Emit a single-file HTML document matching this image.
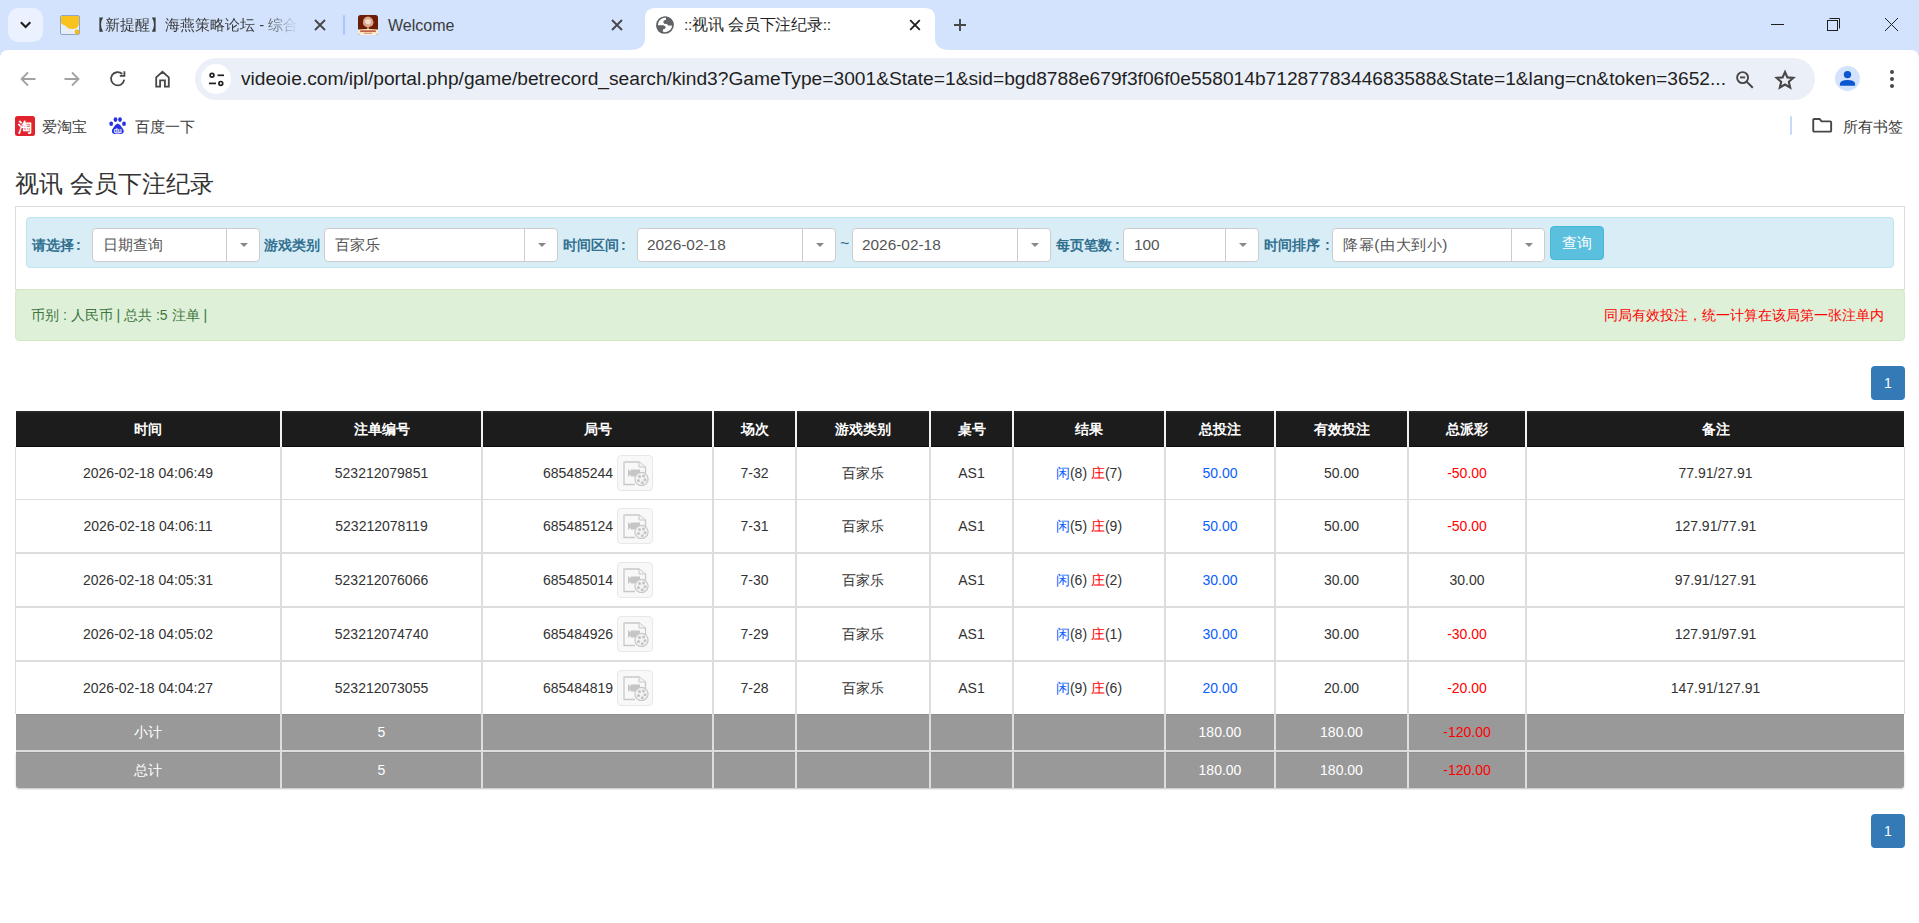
<!DOCTYPE html>
<html><head><meta charset="utf-8"><title>bet record</title>
<style>
html,body{margin:0;padding:0;}
body{position:relative;width:1919px;height:923px;overflow:hidden;background:#fff;font-family:"Liberation Sans",sans-serif;}
</style></head><body>
<div style="position:absolute;left:0;top:0;width:1919px;height:62px;background:#d3e3fd"></div>
<div style="position:absolute;left:8px;top:8px;width:35px;height:34px;border-radius:10px;background:#ebf1fe"></div>
<svg style="position:absolute;left:18px;top:18px" width="16" height="14" viewBox="0 0 16 14"><path d="M2.9 4.3 L7.6 9 L12.3 4.3" fill="none" stroke="#1f1f1f" stroke-width="2.1"/></svg>
<svg style="position:absolute;left:60px;top:15px" width="20" height="20" viewBox="0 0 20 20">
<rect x="0.5" y="0.5" width="19" height="19" rx="1.5" fill="#e6eef9" stroke="#8fa6c9"/>
<path d="M1 1 H19 V8.5 Q18.5 14 12 14 Q7.5 14 6 11 Q3 10.5 1 8 Z" fill="#f8c31c"/>
<circle cx="17" cy="17" r="2.4" fill="#f6b91a"/>
</svg>
<div style="position:absolute;left:90px;top:14px;width:208px;height:22px;overflow:hidden;white-space:nowrap;font-size:15px;line-height:22px;color:#3b3b3b;-webkit-mask-image:linear-gradient(to right,#000 172px,transparent 208px)">【新提醒】海燕策略论坛 - 综合</div>
<svg style="position:absolute;left:313px;top:18px" width="14" height="14" viewBox="0 0 14 14"><path d="M2 2 L12 12 M12 2 L2 12" stroke="#474747" stroke-width="1.9"/></svg>
<div style="position:absolute;left:343px;top:15px;width:2px;height:20px;border-radius:1px;background:#a8c7fa"></div>
<svg style="position:absolute;left:358px;top:15px" width="20" height="20" viewBox="0 0 20 20">
<rect x="0" y="0" width="20" height="20" rx="2.5" fill="#6c1c07"/>
<path d="M0 14.6 Q10 13.2 20 14.6 V17.5 Q20 20 17.5 20 H2.5 Q0 20 0 17.5 Z" fill="#fbefd0"/>
<path d="M5 6.5 Q5.5 2 10 1.6 Q14.5 2.2 15.5 7 Q15.6 10.5 12.5 11.6 Q11 12 10.6 12.8 L11.2 14 H8.8 L9.4 12.8 Q8.8 12 7.2 11.6 Q4.6 10.5 5 6.5 Z" fill="#d9a58a"/>
<path d="M7 5.5 Q9 3.5 12 4.5 Q13.5 6 12.5 8.5 Q10.5 10 8.5 9 Q6.5 7.5 7 5.5 Z" fill="#f3dccd"/>
<rect x="2.2" y="15.3" width="15.6" height="1.8" fill="#b4442a" opacity="0.85"/>
<rect x="6" y="17.8" width="8" height="1" fill="#c0664a" opacity="0.7"/>
</svg>
<div style="position:absolute;left:388px;top:15px;height:22px;white-space:nowrap;font-size:16px;line-height:22px;color:#3b3b3b">Welcome</div>
<svg style="position:absolute;left:610px;top:18px" width="14" height="14" viewBox="0 0 14 14"><path d="M2 2 L12 12 M12 2 L2 12" stroke="#474747" stroke-width="1.9"/></svg>
<svg style="position:absolute;left:630px;top:0" width="320" height="50" viewBox="0 0 320 50">
<path d="M0 50 Q15 50 15 38 V18 Q15 8 25 8 H295 Q305 8 305 18 V38 Q305 50 320 50 Z" fill="#ffffff"/>
</svg>
<svg style="position:absolute;left:654px;top:14px" width="22" height="22" viewBox="0 0 22 22">
<circle cx="11" cy="11" r="8" fill="none" stroke="#5f6368" stroke-width="1.7"/>
<path d="M12 2.6 L12 5.8 Q9.2 6.3 9.2 8.2 Q9.5 10 12.6 10.1 Q13.8 10.4 14 11.5 L19.6 11.5 A8.7 8.7 0 0 0 12 2.6 Z" fill="#5f6368"/>
<path d="M2.4 11.2 L9.5 11.2 Q11.8 12 11.7 13.8 Q11.3 15 9 15.4 Q8.6 16.5 8.8 19.7 A8.7 8.7 0 0 1 2.4 11.2 Z" fill="#5f6368"/>
</svg>
<div style="position:absolute;left:684px;top:14px;height:22px;white-space:nowrap;letter-spacing:-0.2px;font-size:15.5px;line-height:22px;color:#1f1f1f">::视讯 会员下注纪录::</div>
<svg style="position:absolute;left:908px;top:18px" width="14" height="14" viewBox="0 0 14 14"><path d="M2.2 2.2 L11.8 11.8 M11.8 2.2 L2.2 11.8" stroke="#1f1f1f" stroke-width="1.8"/></svg>
<svg style="position:absolute;left:953px;top:18px" width="14" height="14" viewBox="0 0 14 14"><path d="M7 1 V13 M1 7 H13" stroke="#474747" stroke-width="1.9"/></svg>
<div style="position:absolute;left:1771px;top:24px;width:13px;height:1px;background:#1f1f1f"></div>
<svg style="position:absolute;left:1826px;top:17px" width="16" height="16" viewBox="0 0 16 16">
<rect x="1.5" y="3.5" width="10" height="10" fill="none" stroke="#1f1f1f" stroke-width="1"/>
<path d="M3.5 1.5 H13.5 V11.5" fill="none" stroke="#1f1f1f" stroke-width="1"/>
</svg>
<svg style="position:absolute;left:1884px;top:17px" width="15" height="15" viewBox="0 0 15 15"><path d="M1 1 L14 14 M14 1 L1 14" stroke="#1f1f1f" stroke-width="1"/></svg>
<div style="position:absolute;left:0;top:50px;width:1919px;height:98px;background:#fff;border-radius:8px 8px 0 0"></div>
<svg style="position:absolute;left:19px;top:70px" width="18" height="18" viewBox="0 0 18 18"><path d="M16.5 9 H2.5 M9 2.5 L2.5 9 L9 15.5" fill="none" stroke="#a2a2a2" stroke-width="1.8"/></svg>
<svg style="position:absolute;left:63px;top:70px" width="18" height="18" viewBox="0 0 18 18"><path d="M1.5 9 H15.5 M9 2.5 L15.5 9 L9 15.5" fill="none" stroke="#a2a2a2" stroke-width="1.8"/></svg>
<svg style="position:absolute;left:109px;top:70px" width="18" height="18" viewBox="0 0 18 18">
<path d="M13.2 4 A6.6 6.6 0 1 0 15.2 9.6" fill="none" stroke="#474747" stroke-width="1.8"/>
<path d="M15.4 1.2 V5.8 H10.8" fill="none" stroke="#474747" stroke-width="1.8"/>
</svg>
<svg style="position:absolute;left:154px;top:70px" width="18" height="18" viewBox="0 0 18 18">
<path d="M2.2 16.6 V7.4 L8.5 1.8 L14.8 7.4 V16.6 H10.9 V10.4 H6.1 V16.6 Z" fill="none" stroke="#474747" stroke-width="1.8" stroke-linejoin="miter"/>
</svg>
<div style="position:absolute;left:195px;top:58px;width:1620px;height:42px;border-radius:21px;background:#ebeff7"></div>
<div style="position:absolute;left:201px;top:64px;width:30px;height:30px;border-radius:15px;background:#fff"></div>
<svg style="position:absolute;left:207px;top:71px" width="18" height="17" viewBox="0 0 18 17">
<circle cx="5" cy="4.3" r="1.9" fill="none" stroke="#1f1f1f" stroke-width="1.7"/>
<path d="M10.5 4.3 H17" stroke="#1f1f1f" stroke-width="1.7"/>
<circle cx="13.8" cy="12.4" r="1.9" fill="none" stroke="#1f1f1f" stroke-width="1.7"/>
<path d="M2 12.4 H9" stroke="#1f1f1f" stroke-width="1.7"/>
</svg>
<div id="url" style="position:absolute;left:241px;top:67px;height:24px;white-space:nowrap;font-size:19.2px;line-height:24px;color:#1f1f1f">videoie.com/ipl/portal.php/game/betrecord_search/kind3?GameType=3001&amp;State=1&amp;sid=bgd8788e679f3f06f0e558014b7128778344683588&amp;State=1&amp;lang=cn&amp;token=3652...</div>
<svg style="position:absolute;left:1735px;top:70px" width="20" height="20" viewBox="0 0 20 20">
<circle cx="7.6" cy="7.6" r="5.5" fill="none" stroke="#474747" stroke-width="1.9"/>
<path d="M5 7.4 H10.2" stroke="#474747" stroke-width="1.9"/>
<path d="M11.6 11.6 L17.8 17.8" stroke="#474747" stroke-width="2"/>
</svg>
<svg style="position:absolute;left:1774px;top:69px" width="22" height="21" viewBox="0 0 22 21">
<path d="M11 3 L13.4 8.4 L19.3 8.9 L14.8 12.8 L16.2 18.5 L11 15.5 L5.8 18.5 L7.2 12.8 L2.7 8.9 L8.6 8.4 Z" fill="none" stroke="#474747" stroke-width="2.1" stroke-linejoin="miter"/>
</svg>
<div style="position:absolute;left:1835px;top:66px;width:25px;height:25px;border-radius:50%;background:#d3e3fd"></div>
<svg style="position:absolute;left:1835px;top:66px" width="25" height="25" viewBox="0 0 25 25">
<circle cx="12.5" cy="8.6" r="3.7" fill="#0b57d0"/>
<path d="M4.9 19.8 V17.8 Q5.2 14.2 12.5 14 Q19.8 14.2 20.1 17.8 V19.8 Z" fill="#0b57d0"/>
</svg>
<div style="position:absolute;left:1890px;top:70px;width:4px;height:4px;border-radius:2px;background:#474747"></div>
<div style="position:absolute;left:1890px;top:77px;width:4px;height:4px;border-radius:2px;background:#474747"></div>
<div style="position:absolute;left:1890px;top:84px;width:4px;height:4px;border-radius:2px;background:#474747"></div>
<svg style="position:absolute;left:15px;top:116px" width="20" height="20" viewBox="0 0 20 20">
<rect x="0" y="0" width="20" height="20" rx="2.5" fill="#e0232c"/>
<text x="10" y="15.5" font-size="14" font-weight="bold" fill="#fff" text-anchor="middle" font-family="Liberation Sans">淘</text>
</svg>
<div style="position:absolute;left:42px;top:116px;height:22px;white-space:nowrap;font-size:14.7px;line-height:22px;color:#3b3b3b">爱淘宝</div>
<svg style="position:absolute;left:109px;top:117px" width="18" height="18" viewBox="0 0 18 18">
<ellipse cx="2.2" cy="6.8" rx="1.9" ry="2.3" fill="#2932e1"/>
<ellipse cx="6.5" cy="2.6" rx="1.9" ry="2.4" fill="#2932e1"/>
<ellipse cx="11" cy="2.6" rx="1.9" ry="2.4" fill="#2932e1"/>
<ellipse cx="15" cy="6.8" rx="1.9" ry="2.3" fill="#2932e1"/>
<path d="M8.7 6.5 Q11 6.8 13 10.5 Q15.5 13.5 14.5 15.5 Q13.5 17.3 11 16.8 Q8.7 16.2 6.5 16.8 Q3.8 17.3 3 15.3 Q2.3 13 4.5 10.5 Q6.5 6.8 8.7 6.5 Z" fill="#2932e1"/>
<text x="8.8" y="16" font-size="6.5" font-weight="bold" fill="#fff" text-anchor="middle" font-family="Liberation Sans">du</text>
</svg>
<div style="position:absolute;left:135px;top:116px;height:22px;white-space:nowrap;font-size:14.7px;line-height:22px;color:#3b3b3b">百度一下</div>
<div style="position:absolute;left:1790px;top:116px;width:2px;height:19px;border-radius:1px;background:#c7dafc"></div>
<svg style="position:absolute;left:1812px;top:117px" width="21" height="17" viewBox="0 0 21 17">
<path d="M1.25 2.9 Q1.25 1.95 2.2 1.95 H7.6 L9.6 4.4 H18.2 Q19.15 4.4 19.15 5.35 V13.7 Q19.15 14.65 18.2 14.65 H2.2 Q1.25 14.65 1.25 13.7 Z" fill="none" stroke="#474747" stroke-width="1.9" stroke-linejoin="round"/>
</svg>
<div style="position:absolute;left:1843px;top:116px;height:22px;white-space:nowrap;font-size:14.7px;line-height:22px;color:#3b3b3b">所有书签</div>
<div id="title" style="position:absolute;left:15px;top:167px;height:34px;line-height:34px;font-size:24px;color:#333;white-space:nowrap">视讯 会员下注纪录</div>
<div style="position:absolute;left:15px;top:206px;width:1888px;height:82px;border:1px solid #ddd;border-bottom:1px solid #ddd;background:#fff"></div>
<div style="position:absolute;left:26px;top:217px;width:1866px;height:49px;border:1px solid #bce8f1;border-radius:4px;background:#d9edf7"></div>
<div id="lab1" style="position:absolute;left:32px;top:234px;height:22px;line-height:22px;font-size:14.3px;font-weight:bold;color:#31708f;white-space:nowrap">请选择<span style="margin-left:2px">:</span></div>
<div style="position:absolute;left:92px;top:228px;width:166px;height:32px;border:1px solid #ccc;border-radius:4px;background:#fff"></div>
<div style="position:absolute;left:226px;top:229px;width:1px;height:32px;background:#ccc"></div>
<svg style="position:absolute;left:240px;top:243px" width="8" height="4" viewBox="0 0 8 4"><path d="M0 0 H8 L4 4 Z" fill="#888"/></svg>
<div id="sel1" style="position:absolute;left:103px;top:228px;height:34px;line-height:34px;font-size:15.4px;color:#555;white-space:nowrap">日期查询</div>
<div id="lab2" style="position:absolute;left:264px;top:234px;height:22px;line-height:22px;font-size:14.3px;font-weight:bold;color:#31708f;white-space:nowrap">游戏类别</div>
<div style="position:absolute;left:324px;top:228px;width:232px;height:32px;border:1px solid #ccc;border-radius:4px;background:#fff"></div>
<div style="position:absolute;left:524px;top:229px;width:1px;height:32px;background:#ccc"></div>
<svg style="position:absolute;left:538px;top:243px" width="8" height="4" viewBox="0 0 8 4"><path d="M0 0 H8 L4 4 Z" fill="#888"/></svg>
<div  style="position:absolute;left:335px;top:228px;height:34px;line-height:34px;font-size:15.4px;color:#555;white-space:nowrap">百家乐</div>
<div  style="position:absolute;left:563px;top:234px;height:22px;line-height:22px;font-size:14.3px;font-weight:bold;color:#31708f;white-space:nowrap">时间区间<span style="margin-left:2px">:</span></div>
<div style="position:absolute;left:637px;top:228px;width:197px;height:32px;border:1px solid #ccc;border-radius:4px;background:#fff"></div>
<div style="position:absolute;left:802px;top:229px;width:1px;height:32px;background:#ccc"></div>
<svg style="position:absolute;left:816px;top:243px" width="8" height="4" viewBox="0 0 8 4"><path d="M0 0 H8 L4 4 Z" fill="#888"/></svg>
<div id="sel3" style="position:absolute;left:647px;top:228px;height:34px;line-height:34px;font-size:15.4px;color:#555;white-space:nowrap">2026-02-18</div>
<div style="position:absolute;left:840px;top:233px;height:22px;line-height:22px;font-size:16px;color:#31708f">~</div>
<div style="position:absolute;left:852px;top:228px;width:197px;height:32px;border:1px solid #ccc;border-radius:4px;background:#fff"></div>
<div style="position:absolute;left:1017px;top:229px;width:1px;height:32px;background:#ccc"></div>
<svg style="position:absolute;left:1031px;top:243px" width="8" height="4" viewBox="0 0 8 4"><path d="M0 0 H8 L4 4 Z" fill="#888"/></svg>
<div  style="position:absolute;left:862px;top:228px;height:34px;line-height:34px;font-size:15.4px;color:#555;white-space:nowrap">2026-02-18</div>
<div  style="position:absolute;left:1056px;top:234px;height:22px;line-height:22px;font-size:14.3px;font-weight:bold;color:#31708f;white-space:nowrap">每页笔数<span style="margin-left:3px">:</span></div>
<div style="position:absolute;left:1123px;top:228px;width:134px;height:32px;border:1px solid #ccc;border-radius:4px;background:#fff"></div>
<div style="position:absolute;left:1225px;top:229px;width:1px;height:32px;background:#ccc"></div>
<svg style="position:absolute;left:1239px;top:243px" width="8" height="4" viewBox="0 0 8 4"><path d="M0 0 H8 L4 4 Z" fill="#888"/></svg>
<div  style="position:absolute;left:1134px;top:228px;height:34px;line-height:34px;font-size:15.4px;color:#555;white-space:nowrap">100</div>
<div  style="position:absolute;left:1264px;top:234px;height:22px;line-height:22px;font-size:14.3px;font-weight:bold;color:#31708f;white-space:nowrap">时间排序<span style="margin-left:5px">:</span></div>
<div style="position:absolute;left:1332px;top:228px;width:211px;height:32px;border:1px solid #ccc;border-radius:4px;background:#fff"></div>
<div style="position:absolute;left:1511px;top:229px;width:1px;height:32px;background:#ccc"></div>
<svg style="position:absolute;left:1525px;top:243px" width="8" height="4" viewBox="0 0 8 4"><path d="M0 0 H8 L4 4 Z" fill="#888"/></svg>
<div  style="position:absolute;left:1343px;top:228px;height:34px;line-height:34px;font-size:15.4px;color:#555;white-space:nowrap"><span style="letter-spacing:0.6px">降幂(由大到小)</span></div>
<div style="position:absolute;left:1550px;top:226px;width:52px;height:32px;border:1px solid #46b8da;border-radius:4px;background:#5bc0de"></div>
<div id="btn" style="position:absolute;left:1550px;top:226px;width:54px;height:34px;line-height:34px;text-align:center;font-size:15px;color:#fff">查询</div>
<div style="position:absolute;left:15px;top:289px;width:1888px;height:50px;border:1px solid #d6e9c6;border-radius:4px;background:#dff0d8"></div>
<div id="g1" style="position:absolute;left:31px;top:304px;height:22px;line-height:22px;font-size:14px;color:#3c763d;white-space:nowrap">币别 : 人民币 | 总共 :5 注单 |</div>
<div id="g2" style="position:absolute;right:35px;top:304px;height:22px;line-height:22px;font-size:14px;color:#ff0000;white-space:nowrap">同局有效投注，统一计算在该局第一张注单内</div>
<div style="position:absolute;left:1871px;top:366px;width:34px;height:34px;border-radius:4px;background:#337ab7;color:#fff;font-size:14px;line-height:34px;text-align:center">1</div>
<div style="position:absolute;left:1871px;top:814px;width:34px;height:34px;border-radius:4px;background:#337ab7;color:#fff;font-size:14px;line-height:34px;text-align:center">1</div>
<div style="position:absolute;left:16px;top:411px;width:1888px;height:36px;background:#1c1c1c"></div>
<div style="position:absolute;left:16px;top:411px;width:1888px;height:2px;background:#262626"></div>
<div style="position:absolute;left:16px;top:446px;width:1888px;height:1px;background:#0c0c0c"></div>
<div style="position:absolute;left:280px;top:411px;width:2px;height:36px;background:#f2f2f2"></div>
<div style="position:absolute;left:481px;top:411px;width:2px;height:36px;background:#f2f2f2"></div>
<div style="position:absolute;left:712px;top:411px;width:2px;height:36px;background:#f2f2f2"></div>
<div style="position:absolute;left:795px;top:411px;width:2px;height:36px;background:#f2f2f2"></div>
<div style="position:absolute;left:929px;top:411px;width:2px;height:36px;background:#f2f2f2"></div>
<div style="position:absolute;left:1012px;top:411px;width:2px;height:36px;background:#f2f2f2"></div>
<div style="position:absolute;left:1164px;top:411px;width:2px;height:36px;background:#f2f2f2"></div>
<div style="position:absolute;left:1274px;top:411px;width:2px;height:36px;background:#f2f2f2"></div>
<div style="position:absolute;left:1407px;top:411px;width:2px;height:36px;background:#f2f2f2"></div>
<div style="position:absolute;left:1525px;top:411px;width:2px;height:36px;background:#f2f2f2"></div>
<div style="position:absolute;left:16px;top:411px;width:264px;height:36px;line-height:36px;text-align:center;font-size:14px;font-weight:bold;color:#fff;white-space:nowrap">时间</div>
<div style="position:absolute;left:282px;top:411px;width:199px;height:36px;line-height:36px;text-align:center;font-size:14px;font-weight:bold;color:#fff;white-space:nowrap">注单编号</div>
<div style="position:absolute;left:483px;top:411px;width:229px;height:36px;line-height:36px;text-align:center;font-size:14px;font-weight:bold;color:#fff;white-space:nowrap">局号</div>
<div style="position:absolute;left:714px;top:411px;width:81px;height:36px;line-height:36px;text-align:center;font-size:14px;font-weight:bold;color:#fff;white-space:nowrap">场次</div>
<div style="position:absolute;left:797px;top:411px;width:132px;height:36px;line-height:36px;text-align:center;font-size:14px;font-weight:bold;color:#fff;white-space:nowrap">游戏类别</div>
<div style="position:absolute;left:931px;top:411px;width:81px;height:36px;line-height:36px;text-align:center;font-size:14px;font-weight:bold;color:#fff;white-space:nowrap">桌号</div>
<div style="position:absolute;left:1014px;top:411px;width:150px;height:36px;line-height:36px;text-align:center;font-size:14px;font-weight:bold;color:#fff;white-space:nowrap">结果</div>
<div style="position:absolute;left:1166px;top:411px;width:108px;height:36px;line-height:36px;text-align:center;font-size:14px;font-weight:bold;color:#fff;white-space:nowrap">总投注</div>
<div style="position:absolute;left:1276px;top:411px;width:131px;height:36px;line-height:36px;text-align:center;font-size:14px;font-weight:bold;color:#fff;white-space:nowrap">有效投注</div>
<div style="position:absolute;left:1409px;top:411px;width:116px;height:36px;line-height:36px;text-align:center;font-size:14px;font-weight:bold;color:#fff;white-space:nowrap">总派彩</div>
<div style="position:absolute;left:1527px;top:411px;width:377px;height:36px;line-height:36px;text-align:center;font-size:14px;font-weight:bold;color:#fff;white-space:nowrap">备注</div>
<div style="position:absolute;left:15px;top:447px;width:1px;height:267px;background:#ddd"></div>
<div style="position:absolute;left:1904px;top:447px;width:1px;height:267px;background:#ddd"></div>
<div style="position:absolute;left:280px;top:447px;width:2px;height:267px;background:#ddd"></div>
<div style="position:absolute;left:481px;top:447px;width:2px;height:267px;background:#ddd"></div>
<div style="position:absolute;left:712px;top:447px;width:2px;height:267px;background:#ddd"></div>
<div style="position:absolute;left:795px;top:447px;width:2px;height:267px;background:#ddd"></div>
<div style="position:absolute;left:929px;top:447px;width:2px;height:267px;background:#ddd"></div>
<div style="position:absolute;left:1012px;top:447px;width:2px;height:267px;background:#ddd"></div>
<div style="position:absolute;left:1164px;top:447px;width:2px;height:267px;background:#ddd"></div>
<div style="position:absolute;left:1274px;top:447px;width:2px;height:267px;background:#ddd"></div>
<div style="position:absolute;left:1407px;top:447px;width:2px;height:267px;background:#ddd"></div>
<div style="position:absolute;left:1525px;top:447px;width:2px;height:267px;background:#ddd"></div>
<div style="position:absolute;left:15px;top:499px;width:1890px;height:1px;background:#ddd"></div>
<div style="position:absolute;left:16px;top:447px;width:264px;height:52px;line-height:52px;text-align:center;font-size:14px;color:#333;white-space:nowrap">2026-02-18 04:06:49</div>
<div style="position:absolute;left:282px;top:447px;width:199px;height:52px;line-height:52px;text-align:center;font-size:14px;color:#333;white-space:nowrap">523212079851</div>
<div style="position:absolute;left:543px;top:447px;height:52px;line-height:52px;font-size:14px;color:#333;white-space:nowrap">685485244</div>
<div style="position:absolute;left:617px;top:455px;width:34px;height:34px;border:1px solid #e8e8e8;border-radius:4px;background:#f8f8f8"></div>
<svg style="position:absolute;left:623px;top:461px" width="26" height="25" viewBox="0 0 26 25">
<path d="M1.5 1 H16 L22.5 6 V14" fill="none" stroke="#c8c8c8" stroke-width="1.3"/>
<path d="M1 0.5 V23.5 H12" fill="none" stroke="#c8c8c8" stroke-width="1.3"/>
<path d="M16 1 V6 H22.5" fill="#f3f3f3" stroke="#c8c8c8" stroke-width="1"/>
<path d="M5 8 L7.5 10.5 V8.5 H17 V15.5 H7.5 V13.5 L5 16 Z" fill="#c6c6c6"/>
<circle cx="18.5" cy="18" r="6.6" fill="#f3f3f3" stroke="#c8c8c8" stroke-width="1.2"/>
<circle cx="16.5" cy="15.5" r="1.5" fill="#c4c4c4"/>
<circle cx="20.5" cy="15" r="1.5" fill="#c4c4c4"/>
<circle cx="22" cy="18.8" r="1.5" fill="#c4c4c4"/>
<circle cx="19.3" cy="21.8" r="1.5" fill="#c4c4c4"/>
<circle cx="15.5" cy="19.5" r="1.5" fill="#c4c4c4"/>
</svg>
<div style="position:absolute;left:714px;top:447px;width:81px;height:52px;line-height:52px;text-align:center;font-size:14px;color:#333;white-space:nowrap">7-32</div>
<div style="position:absolute;left:797px;top:447px;width:132px;height:52px;line-height:52px;text-align:center;font-size:14px;color:#333;white-space:nowrap">百家乐</div>
<div style="position:absolute;left:931px;top:447px;width:81px;height:52px;line-height:52px;text-align:center;font-size:14px;color:#333;white-space:nowrap">AS1</div>
<div style="position:absolute;left:1014px;top:447px;width:150px;height:52px;line-height:52px;text-align:center;font-size:14px;color:#333;white-space:nowrap"><span style="color:#0a60ff">闲</span>(8) <span style="color:#ff0000">庄</span>(7)</div>
<div style="position:absolute;left:1166px;top:447px;width:108px;height:52px;line-height:52px;text-align:center;font-size:14px;color:#0a60ff;white-space:nowrap">50.00</div>
<div style="position:absolute;left:1276px;top:447px;width:131px;height:52px;line-height:52px;text-align:center;font-size:14px;color:#333;white-space:nowrap">50.00</div>
<div style="position:absolute;left:1409px;top:447px;width:116px;height:52px;line-height:52px;text-align:center;font-size:14px;color:#ff0000;white-space:nowrap">-50.00</div>
<div style="position:absolute;left:1527px;top:447px;width:377px;height:52px;line-height:52px;text-align:center;font-size:14px;color:#333;white-space:nowrap">77.91/27.91</div>
<div style="position:absolute;left:15px;top:552px;width:1890px;height:2px;background:#ddd"></div>
<div style="position:absolute;left:16px;top:500px;width:264px;height:52px;line-height:52px;text-align:center;font-size:14px;color:#333;white-space:nowrap">2026-02-18 04:06:11</div>
<div style="position:absolute;left:282px;top:500px;width:199px;height:52px;line-height:52px;text-align:center;font-size:14px;color:#333;white-space:nowrap">523212078119</div>
<div style="position:absolute;left:543px;top:500px;height:52px;line-height:52px;font-size:14px;color:#333;white-space:nowrap">685485124</div>
<div style="position:absolute;left:617px;top:508px;width:34px;height:34px;border:1px solid #e8e8e8;border-radius:4px;background:#f8f8f8"></div>
<svg style="position:absolute;left:623px;top:514px" width="26" height="25" viewBox="0 0 26 25">
<path d="M1.5 1 H16 L22.5 6 V14" fill="none" stroke="#c8c8c8" stroke-width="1.3"/>
<path d="M1 0.5 V23.5 H12" fill="none" stroke="#c8c8c8" stroke-width="1.3"/>
<path d="M16 1 V6 H22.5" fill="#f3f3f3" stroke="#c8c8c8" stroke-width="1"/>
<path d="M5 8 L7.5 10.5 V8.5 H17 V15.5 H7.5 V13.5 L5 16 Z" fill="#c6c6c6"/>
<circle cx="18.5" cy="18" r="6.6" fill="#f3f3f3" stroke="#c8c8c8" stroke-width="1.2"/>
<circle cx="16.5" cy="15.5" r="1.5" fill="#c4c4c4"/>
<circle cx="20.5" cy="15" r="1.5" fill="#c4c4c4"/>
<circle cx="22" cy="18.8" r="1.5" fill="#c4c4c4"/>
<circle cx="19.3" cy="21.8" r="1.5" fill="#c4c4c4"/>
<circle cx="15.5" cy="19.5" r="1.5" fill="#c4c4c4"/>
</svg>
<div style="position:absolute;left:714px;top:500px;width:81px;height:52px;line-height:52px;text-align:center;font-size:14px;color:#333;white-space:nowrap">7-31</div>
<div style="position:absolute;left:797px;top:500px;width:132px;height:52px;line-height:52px;text-align:center;font-size:14px;color:#333;white-space:nowrap">百家乐</div>
<div style="position:absolute;left:931px;top:500px;width:81px;height:52px;line-height:52px;text-align:center;font-size:14px;color:#333;white-space:nowrap">AS1</div>
<div style="position:absolute;left:1014px;top:500px;width:150px;height:52px;line-height:52px;text-align:center;font-size:14px;color:#333;white-space:nowrap"><span style="color:#0a60ff">闲</span>(5) <span style="color:#ff0000">庄</span>(9)</div>
<div style="position:absolute;left:1166px;top:500px;width:108px;height:52px;line-height:52px;text-align:center;font-size:14px;color:#0a60ff;white-space:nowrap">50.00</div>
<div style="position:absolute;left:1276px;top:500px;width:131px;height:52px;line-height:52px;text-align:center;font-size:14px;color:#333;white-space:nowrap">50.00</div>
<div style="position:absolute;left:1409px;top:500px;width:116px;height:52px;line-height:52px;text-align:center;font-size:14px;color:#ff0000;white-space:nowrap">-50.00</div>
<div style="position:absolute;left:1527px;top:500px;width:377px;height:52px;line-height:52px;text-align:center;font-size:14px;color:#333;white-space:nowrap">127.91/77.91</div>
<div style="position:absolute;left:15px;top:606px;width:1890px;height:2px;background:#ddd"></div>
<div style="position:absolute;left:16px;top:554px;width:264px;height:52px;line-height:52px;text-align:center;font-size:14px;color:#333;white-space:nowrap">2026-02-18 04:05:31</div>
<div style="position:absolute;left:282px;top:554px;width:199px;height:52px;line-height:52px;text-align:center;font-size:14px;color:#333;white-space:nowrap">523212076066</div>
<div style="position:absolute;left:543px;top:554px;height:52px;line-height:52px;font-size:14px;color:#333;white-space:nowrap">685485014</div>
<div style="position:absolute;left:617px;top:562px;width:34px;height:34px;border:1px solid #e8e8e8;border-radius:4px;background:#f8f8f8"></div>
<svg style="position:absolute;left:623px;top:568px" width="26" height="25" viewBox="0 0 26 25">
<path d="M1.5 1 H16 L22.5 6 V14" fill="none" stroke="#c8c8c8" stroke-width="1.3"/>
<path d="M1 0.5 V23.5 H12" fill="none" stroke="#c8c8c8" stroke-width="1.3"/>
<path d="M16 1 V6 H22.5" fill="#f3f3f3" stroke="#c8c8c8" stroke-width="1"/>
<path d="M5 8 L7.5 10.5 V8.5 H17 V15.5 H7.5 V13.5 L5 16 Z" fill="#c6c6c6"/>
<circle cx="18.5" cy="18" r="6.6" fill="#f3f3f3" stroke="#c8c8c8" stroke-width="1.2"/>
<circle cx="16.5" cy="15.5" r="1.5" fill="#c4c4c4"/>
<circle cx="20.5" cy="15" r="1.5" fill="#c4c4c4"/>
<circle cx="22" cy="18.8" r="1.5" fill="#c4c4c4"/>
<circle cx="19.3" cy="21.8" r="1.5" fill="#c4c4c4"/>
<circle cx="15.5" cy="19.5" r="1.5" fill="#c4c4c4"/>
</svg>
<div style="position:absolute;left:714px;top:554px;width:81px;height:52px;line-height:52px;text-align:center;font-size:14px;color:#333;white-space:nowrap">7-30</div>
<div style="position:absolute;left:797px;top:554px;width:132px;height:52px;line-height:52px;text-align:center;font-size:14px;color:#333;white-space:nowrap">百家乐</div>
<div style="position:absolute;left:931px;top:554px;width:81px;height:52px;line-height:52px;text-align:center;font-size:14px;color:#333;white-space:nowrap">AS1</div>
<div style="position:absolute;left:1014px;top:554px;width:150px;height:52px;line-height:52px;text-align:center;font-size:14px;color:#333;white-space:nowrap"><span style="color:#0a60ff">闲</span>(6) <span style="color:#ff0000">庄</span>(2)</div>
<div style="position:absolute;left:1166px;top:554px;width:108px;height:52px;line-height:52px;text-align:center;font-size:14px;color:#0a60ff;white-space:nowrap">30.00</div>
<div style="position:absolute;left:1276px;top:554px;width:131px;height:52px;line-height:52px;text-align:center;font-size:14px;color:#333;white-space:nowrap">30.00</div>
<div style="position:absolute;left:1409px;top:554px;width:116px;height:52px;line-height:52px;text-align:center;font-size:14px;color:#333;white-space:nowrap">30.00</div>
<div style="position:absolute;left:1527px;top:554px;width:377px;height:52px;line-height:52px;text-align:center;font-size:14px;color:#333;white-space:nowrap">97.91/127.91</div>
<div style="position:absolute;left:15px;top:660px;width:1890px;height:2px;background:#ddd"></div>
<div style="position:absolute;left:16px;top:608px;width:264px;height:52px;line-height:52px;text-align:center;font-size:14px;color:#333;white-space:nowrap">2026-02-18 04:05:02</div>
<div style="position:absolute;left:282px;top:608px;width:199px;height:52px;line-height:52px;text-align:center;font-size:14px;color:#333;white-space:nowrap">523212074740</div>
<div style="position:absolute;left:543px;top:608px;height:52px;line-height:52px;font-size:14px;color:#333;white-space:nowrap">685484926</div>
<div style="position:absolute;left:617px;top:616px;width:34px;height:34px;border:1px solid #e8e8e8;border-radius:4px;background:#f8f8f8"></div>
<svg style="position:absolute;left:623px;top:622px" width="26" height="25" viewBox="0 0 26 25">
<path d="M1.5 1 H16 L22.5 6 V14" fill="none" stroke="#c8c8c8" stroke-width="1.3"/>
<path d="M1 0.5 V23.5 H12" fill="none" stroke="#c8c8c8" stroke-width="1.3"/>
<path d="M16 1 V6 H22.5" fill="#f3f3f3" stroke="#c8c8c8" stroke-width="1"/>
<path d="M5 8 L7.5 10.5 V8.5 H17 V15.5 H7.5 V13.5 L5 16 Z" fill="#c6c6c6"/>
<circle cx="18.5" cy="18" r="6.6" fill="#f3f3f3" stroke="#c8c8c8" stroke-width="1.2"/>
<circle cx="16.5" cy="15.5" r="1.5" fill="#c4c4c4"/>
<circle cx="20.5" cy="15" r="1.5" fill="#c4c4c4"/>
<circle cx="22" cy="18.8" r="1.5" fill="#c4c4c4"/>
<circle cx="19.3" cy="21.8" r="1.5" fill="#c4c4c4"/>
<circle cx="15.5" cy="19.5" r="1.5" fill="#c4c4c4"/>
</svg>
<div style="position:absolute;left:714px;top:608px;width:81px;height:52px;line-height:52px;text-align:center;font-size:14px;color:#333;white-space:nowrap">7-29</div>
<div style="position:absolute;left:797px;top:608px;width:132px;height:52px;line-height:52px;text-align:center;font-size:14px;color:#333;white-space:nowrap">百家乐</div>
<div style="position:absolute;left:931px;top:608px;width:81px;height:52px;line-height:52px;text-align:center;font-size:14px;color:#333;white-space:nowrap">AS1</div>
<div style="position:absolute;left:1014px;top:608px;width:150px;height:52px;line-height:52px;text-align:center;font-size:14px;color:#333;white-space:nowrap"><span style="color:#0a60ff">闲</span>(8) <span style="color:#ff0000">庄</span>(1)</div>
<div style="position:absolute;left:1166px;top:608px;width:108px;height:52px;line-height:52px;text-align:center;font-size:14px;color:#0a60ff;white-space:nowrap">30.00</div>
<div style="position:absolute;left:1276px;top:608px;width:131px;height:52px;line-height:52px;text-align:center;font-size:14px;color:#333;white-space:nowrap">30.00</div>
<div style="position:absolute;left:1409px;top:608px;width:116px;height:52px;line-height:52px;text-align:center;font-size:14px;color:#ff0000;white-space:nowrap">-30.00</div>
<div style="position:absolute;left:1527px;top:608px;width:377px;height:52px;line-height:52px;text-align:center;font-size:14px;color:#333;white-space:nowrap">127.91/97.91</div>
<div style="position:absolute;left:16px;top:662px;width:264px;height:52px;line-height:52px;text-align:center;font-size:14px;color:#333;white-space:nowrap">2026-02-18 04:04:27</div>
<div style="position:absolute;left:282px;top:662px;width:199px;height:52px;line-height:52px;text-align:center;font-size:14px;color:#333;white-space:nowrap">523212073055</div>
<div style="position:absolute;left:543px;top:662px;height:52px;line-height:52px;font-size:14px;color:#333;white-space:nowrap">685484819</div>
<div style="position:absolute;left:617px;top:670px;width:34px;height:34px;border:1px solid #e8e8e8;border-radius:4px;background:#f8f8f8"></div>
<svg style="position:absolute;left:623px;top:676px" width="26" height="25" viewBox="0 0 26 25">
<path d="M1.5 1 H16 L22.5 6 V14" fill="none" stroke="#c8c8c8" stroke-width="1.3"/>
<path d="M1 0.5 V23.5 H12" fill="none" stroke="#c8c8c8" stroke-width="1.3"/>
<path d="M16 1 V6 H22.5" fill="#f3f3f3" stroke="#c8c8c8" stroke-width="1"/>
<path d="M5 8 L7.5 10.5 V8.5 H17 V15.5 H7.5 V13.5 L5 16 Z" fill="#c6c6c6"/>
<circle cx="18.5" cy="18" r="6.6" fill="#f3f3f3" stroke="#c8c8c8" stroke-width="1.2"/>
<circle cx="16.5" cy="15.5" r="1.5" fill="#c4c4c4"/>
<circle cx="20.5" cy="15" r="1.5" fill="#c4c4c4"/>
<circle cx="22" cy="18.8" r="1.5" fill="#c4c4c4"/>
<circle cx="19.3" cy="21.8" r="1.5" fill="#c4c4c4"/>
<circle cx="15.5" cy="19.5" r="1.5" fill="#c4c4c4"/>
</svg>
<div style="position:absolute;left:714px;top:662px;width:81px;height:52px;line-height:52px;text-align:center;font-size:14px;color:#333;white-space:nowrap">7-28</div>
<div style="position:absolute;left:797px;top:662px;width:132px;height:52px;line-height:52px;text-align:center;font-size:14px;color:#333;white-space:nowrap">百家乐</div>
<div style="position:absolute;left:931px;top:662px;width:81px;height:52px;line-height:52px;text-align:center;font-size:14px;color:#333;white-space:nowrap">AS1</div>
<div style="position:absolute;left:1014px;top:662px;width:150px;height:52px;line-height:52px;text-align:center;font-size:14px;color:#333;white-space:nowrap"><span style="color:#0a60ff">闲</span>(9) <span style="color:#ff0000">庄</span>(6)</div>
<div style="position:absolute;left:1166px;top:662px;width:108px;height:52px;line-height:52px;text-align:center;font-size:14px;color:#0a60ff;white-space:nowrap">20.00</div>
<div style="position:absolute;left:1276px;top:662px;width:131px;height:52px;line-height:52px;text-align:center;font-size:14px;color:#333;white-space:nowrap">20.00</div>
<div style="position:absolute;left:1409px;top:662px;width:116px;height:52px;line-height:52px;text-align:center;font-size:14px;color:#ff0000;white-space:nowrap">-20.00</div>
<div style="position:absolute;left:1527px;top:662px;width:377px;height:52px;line-height:52px;text-align:center;font-size:14px;color:#333;white-space:nowrap">147.91/127.91</div>
<div style="position:absolute;left:16px;top:714px;width:1888px;height:36px;background:#999;"></div>
<div style="position:absolute;left:16px;top:714px;width:1888px;height:1px;background:#8f8f8f"></div>
<div style="position:absolute;left:16px;top:714px;width:264px;height:36px;line-height:36px;text-align:center;font-size:14px;color:#fff;white-space:nowrap">小计</div>
<div style="position:absolute;left:282px;top:714px;width:199px;height:36px;line-height:36px;text-align:center;font-size:14px;color:#fff;white-space:nowrap">5</div>
<div style="position:absolute;left:1166px;top:714px;width:108px;height:36px;line-height:36px;text-align:center;font-size:14px;color:#fff;white-space:nowrap">180.00</div>
<div style="position:absolute;left:1276px;top:714px;width:131px;height:36px;line-height:36px;text-align:center;font-size:14px;color:#fff;white-space:nowrap">180.00</div>
<div style="position:absolute;left:1409px;top:714px;width:116px;height:36px;line-height:36px;text-align:center;font-size:14px;color:#ff0000;white-space:nowrap">-120.00</div>
<div style="position:absolute;left:16px;top:752px;width:1888px;height:36px;background:#999;border-radius:0 0 3px 3px;box-shadow:0 1px 2px rgba(0,0,0,0.25);"></div>
<div style="position:absolute;left:16px;top:752px;width:1888px;height:1px;background:#8f8f8f"></div>
<div style="position:absolute;left:16px;top:752px;width:264px;height:36px;line-height:36px;text-align:center;font-size:14px;color:#fff;white-space:nowrap">总计</div>
<div style="position:absolute;left:282px;top:752px;width:199px;height:36px;line-height:36px;text-align:center;font-size:14px;color:#fff;white-space:nowrap">5</div>
<div style="position:absolute;left:1166px;top:752px;width:108px;height:36px;line-height:36px;text-align:center;font-size:14px;color:#fff;white-space:nowrap">180.00</div>
<div style="position:absolute;left:1276px;top:752px;width:131px;height:36px;line-height:36px;text-align:center;font-size:14px;color:#fff;white-space:nowrap">180.00</div>
<div style="position:absolute;left:1409px;top:752px;width:116px;height:36px;line-height:36px;text-align:center;font-size:14px;color:#ff0000;white-space:nowrap">-120.00</div>
<div style="position:absolute;left:16px;top:750px;width:1888px;height:2px;background:#ddd"></div>
<div style="position:absolute;left:280px;top:714px;width:2px;height:74px;background:#ddd"></div>
<div style="position:absolute;left:481px;top:714px;width:2px;height:74px;background:#ddd"></div>
<div style="position:absolute;left:712px;top:714px;width:2px;height:74px;background:#ddd"></div>
<div style="position:absolute;left:795px;top:714px;width:2px;height:74px;background:#ddd"></div>
<div style="position:absolute;left:929px;top:714px;width:2px;height:74px;background:#ddd"></div>
<div style="position:absolute;left:1012px;top:714px;width:2px;height:74px;background:#ddd"></div>
<div style="position:absolute;left:1164px;top:714px;width:2px;height:74px;background:#ddd"></div>
<div style="position:absolute;left:1274px;top:714px;width:2px;height:74px;background:#ddd"></div>
<div style="position:absolute;left:1407px;top:714px;width:2px;height:74px;background:#ddd"></div>
<div style="position:absolute;left:1525px;top:714px;width:2px;height:74px;background:#ddd"></div>
</body></html>
